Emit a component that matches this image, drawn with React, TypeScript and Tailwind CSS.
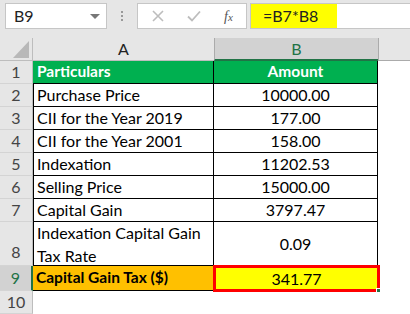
import React from "react";

const rows = [
  { n: "2", a: "Purchase Price", b: "10000.00" },
  { n: "3", a: "CII for the Year 2019", b: "177.00" },
  { n: "4", a: "CII for the Year 2001", b: "158.00" },
  { n: "5", a: "Indexation", b: "11202.53" },
  { n: "6", a: "Selling Price", b: "15000.00" },
  { n: "7", a: "Capital Gain", b: "3797.47" },
];

function RowHead({ n, active, tall }: { n: string; active?: boolean; tall?: boolean }) {
  return (
    <div
      className={
        "w-[33px] shrink-0 flex justify-center text-[16px] border-b border-[#d4d4d4] " +
        (tall ? "items-end pb-[1px] " : "items-center ") +
        (active ? "bg-[#d2d2d2] text-[#217346] border-r-2 border-r-[#217346]" : "bg-[#e6e6e6] text-[#444] border-r border-r-[#bdbdbd]")
      }
    >
      {n}
    </div>
  );
}

export default function App() {
  return (
    <div className="w-[410px] h-[314px] overflow-hidden bg-[#e6e6e6] text-black" style={{ fontFamily: "Lato, 'Liberation Sans', sans-serif" }}>
      {/* formula bar */}
      <div className="flex h-[38px] pt-[3px]">
        <div className="ml-[5px] w-[102px] h-[26px] bg-white border border-[#c6c6c6] flex items-center justify-between pl-[8px] pr-[6px] text-[16px] text-[#222]">
          <span>B9</span>
          <span className="w-0 h-0 border-l-[5px] border-r-[5px] border-t-[5px] border-l-transparent border-r-transparent border-t-[#777]" />
        </div>
        <div className="w-[30px] h-[26px] flex flex-col items-center justify-center gap-[2px]">
          <span className="w-[2px] h-[2px] bg-[#999]" />
          <span className="w-[2px] h-[2px] bg-[#999]" />
          <span className="w-[2px] h-[2px] bg-[#999]" />
        </div>
        <div className="w-[110px] h-[26px] bg-white border border-[#c6c6c6] flex items-center">
          <svg className="ml-[14px]" width="12" height="12" viewBox="0 0 12 12">
            <path d="M1 1L11 11M11 1L1 11" stroke="#bdbdbd" strokeWidth="1.6" fill="none" />
          </svg>
          <svg className="ml-[23px]" width="14" height="12" viewBox="0 0 14 12">
            <path d="M1 6.5L5 10.5L13 1.5" stroke="#bdbdbd" strokeWidth="1.8" fill="none" />
          </svg>
          <span className="ml-[23px] text-[14px] italic text-[#555]" style={{ fontFamily: "'Liberation Serif', serif" }}>
            f<span className="text-[11px]">x</span>
          </span>
        </div>
        <div className="ml-[3px] flex-1 h-[26px] bg-white border border-[#c6c6c6] border-r-0 flex">
          <div className="w-[86px] h-full bg-[#ffff00] flex items-center pl-[12px] text-[16px] text-[#222]">=B7*B8</div>
        </div>
      </div>

      {/* column headers */}
      <div className="flex h-[23px]">
        <div className="w-[33px] shrink-0 flex items-end justify-end pr-[3px] pb-[2px] border-r border-b border-[#bdbdbd]">
          <svg width="16" height="17" viewBox="0 0 16 17">
            <path d="M16 0L16 17L0 17Z" fill="#b8b8b8" />
          </svg>
        </div>
        <div className="w-[181px] shrink-0 flex items-center justify-center text-[16px] text-[#222] border-b border-[#bdbdbd]">A</div>
        <div className="w-[164px] shrink-0 flex items-center justify-center text-[16px] text-[#217346] bg-[#d2d2d2] border-l border-[#ababab] border-b-2 border-b-[#217346]">B</div>
        <div className="flex-1 border-l border-[#ababab] border-b border-b-[#ababab]" />
      </div>

      {/* body */}
      <div className="bg-white">
        <div className="flex h-[23px]">
          <RowHead n="1" />
          <div className="w-[181px] shrink-0 bg-[#00b050] text-white font-bold text-[15.5px] flex items-center pl-[4px] border-b border-black border-r">Particulars</div>
          <div className="w-[164px] shrink-0 bg-[#00b050] text-white font-bold text-[15.5px] flex items-center justify-center border-b border-r border-black">Amount</div>
        </div>
        {rows.map((r) => (
          <div key={r.n} className="flex h-[23px]">
            <RowHead n={r.n} />
            <div className="w-[181px] shrink-0 text-[16px] flex items-center pl-[3px] border-l border-b border-r border-black">{r.a}</div>
            <div className="w-[164px] shrink-0 text-[16px] flex items-center justify-center border-b border-r border-black">{r.b}</div>
          </div>
        ))}
        <div className="flex h-[44px]">
          <RowHead n="8" tall />
          <div className="w-[181px] shrink-0 text-[16px] leading-[23px] flex flex-col justify-center pl-[3px] border-l border-b border-r border-black">
            <span>Indexation Capital Gain</span>
            <span>Tax Rate</span>
          </div>
          <div className="w-[164px] shrink-0 text-[16px] flex items-center justify-center border-b border-r border-black">0.09</div>
        </div>
        <div className="flex h-[25px]">
          <RowHead n="9" active />
          <div className="w-[180px] shrink-0 bg-[#ffc000] font-bold text-[15.5px] flex items-center pl-[3px] border-b border-black">Capital Gain Tax ($)</div>
          <div className="relative w-[167px] shrink-0 -mt-[1px] h-[27px] bg-[#ffff00] text-[16px] flex items-center justify-center border-[3px] border-[#ff0000]">
            341.77
            <span className="absolute -right-[4px] -bottom-[4px] w-[5px] h-[5px] bg-[#217346] border border-white" />
          </div>
        </div>
        <div className="flex h-[23px]">
          <RowHead n="10" />
        </div>
      </div>
    </div>
  );
}
